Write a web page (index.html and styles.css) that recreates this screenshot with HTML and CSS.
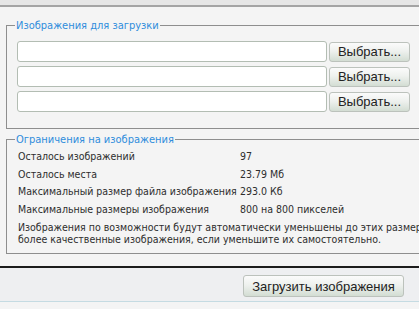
FILE: index.html
```html
<!DOCTYPE html>
<html lang="ru">
<head>
  <meta charset="UTF-8">
  <title>Загрузка изображений</title>
  <link rel="stylesheet" href="styles.css">
</head>
<body>
  <div class="topbar"></div>

  <div class="page">
    <fieldset class="group uploads">
      <legend>Изображения для загрузки</legend>
      <div class="file-row">
        <input class="file-name" type="text">
        <button class="btn">Выбрать...</button>
      </div>
      <div class="file-row">
        <input class="file-name" type="text">
        <button class="btn">Выбрать...</button>
      </div>
      <div class="file-row">
        <input class="file-name" type="text">
        <button class="btn">Выбрать...</button>
      </div>
    </fieldset>

    <fieldset class="group limits">
      <legend>Ограничения на изображения</legend>
      <div class="limit-row"><span class="limit-label">Осталось изображений</span><span>97</span></div>
      <div class="limit-row"><span class="limit-label">Осталось места</span><span>23.79 Мб</span></div>
      <div class="limit-row"><span class="limit-label">Максимальный размер файла изображения</span><span>293.0 Кб</span></div>
      <div class="limit-row"><span class="limit-label">Максимальные размеры изображения</span><span>800 на 800 пикселей</span></div>
      <p class="note">Изображения по возможности будут автоматически уменьшены до этих размеров, однако вы получите<br>более качественные изображения, если уменьшите их самостоятельно.</p>
    </fieldset>
  </div>

  <div class="footer">
    <button class="btn btn-submit">Загрузить изображения</button>
  </div>
</body>
</html>
```

FILE: styles.css
```css
body { margin: 0; background: #f4f4f4; overflow: hidden; font-family: "DejaVu Sans", sans-serif; font-stretch: condensed; font-size: 10.5px; color: #2e2e2e; }
.topbar { height: 5px; background: #e6e6e6; border-bottom: 2px solid #a4a4a4; }
.page { width: 600px; padding: 12px 0 0 6px; }

.group { margin: 0; padding: 0 10px 8px 10px; border: 1px solid #8e8e8e; }
.group legend { color: #2f8ddc; padding: 0 1px; margin-left: -2px; line-height: 13px; font-size: 11px; }
.group + .group { margin-top: 4px; }
.uploads { padding-bottom: 16px; }

.file-row { display: flex; align-items: center; gap: 2px; margin-top: 4px; }
.file-row:first-of-type { margin-top: 9px; }
.file-name { width: 310px; height: 21px; box-sizing: border-box; margin: 0; border: 1px solid #b3bdb3; border-radius: 3px; background: #fff; }

.btn { font-family: "Liberation Sans", Arial, sans-serif; font-stretch: normal; font-size: 13px; color: #222; padding: 0; border: 1px solid #bcc2bc; border-radius: 3px; background: linear-gradient(#fbfbfb, #eef1ee 45%, #d3ddd3); }
.file-row .btn { width: 81px; height: 20px; }

.limits { padding-top: 2px; }
.limit-row { display: flex; line-height: 17.5px; padding-left: 1px; white-space: nowrap; }
.limit-label { width: 222px; }
.note { margin: 3px 0 0 1px; line-height: 12px; white-space: nowrap; }

.footer { margin-top: 12px; border-top: 2px solid #1c1c1c; border-bottom: 1px solid #c5dbe2; background: #eeeff1; height: 36px; display: flex; justify-content: flex-end; align-items: flex-start; padding: 7px 15px 0 0; box-sizing: border-box; }
.btn-submit { width: 161px; height: 22px; }
```
